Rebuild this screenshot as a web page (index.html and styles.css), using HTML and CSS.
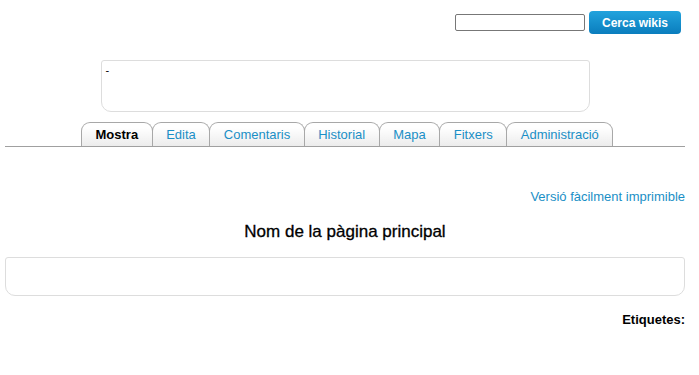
FILE: index.html
```html
<!DOCTYPE html>
<html lang="ca">
<head>
    <meta charset="UTF-8">
    <title>Wiki</title>
    <link rel="stylesheet" href="styles.css">
</head>
<body>
    <!-- Search bar -->
    <div class="search">
        <input type="text" class="search-input">
        <button class="search-button">Cerca wikis</button>
    </div>

    <!-- Page description -->
    <div class="description">-</div>

    <!-- Tabs -->
    <div class="tabs">
        <span class="tab active">Mostra</span>
        <span class="tab">Edita</span>
        <span class="tab">Comentaris</span>
        <span class="tab">Historial</span>
        <span class="tab">Mapa</span>
        <span class="tab">Fitxers</span>
        <span class="tab">Administració</span>
    </div>

    <!-- Page content -->
    <div class="print-link"><a href="#">Versió fàcilment imprimible</a></div>
    <h1 class="page-title">Nom de la pàgina principal</h1>
    <div class="content-box"></div>
    <div class="tags">Etiquetes:</div>
</body>
</html>
```

FILE: styles.css
```css
/* General page styling */
body {
    font-family: 'Liberation Sans', Arial, sans-serif;
    margin: 0;
    padding: 0 14px 0 5px;
    background: #fff;
    color: #000;
}

a {
    color: #1a8fc6;
    text-decoration: none;
}

/* Search bar */
.search {
    display: flex;
    justify-content: flex-end;
    align-items: center;
    gap: 4px;
    padding-top: 11px;
    height: 23px;
    padding-right: 4px;
}

.search-input {
    width: 126px;
    height: 13px;
    border: 1px solid #777;
    border-radius: 2px;
    padding: 1px;
    margin: 0;
}

.search-button {
    height: 23px;
    width: 92px;
    padding: 0;
    border: none;
    border-radius: 4px;
    background: linear-gradient(#22a3dd, #0a7dbd);
    color: #fff;
    font-family: 'Liberation Sans', Arial, sans-serif;
    font-weight: bold;
    font-size: 12px;
}

/* Description box */
.description {
    width: 479px;
    height: 44px;
    margin: 26px auto 0;
    padding: 3px 4px;
    border: 1px solid #ddd;
    border-radius: 3px 3px 10px 10px;
    font-size: 11px;
}

/* Tabs */
.tabs {
    display: flex;
    margin-top: 10px;
    padding-left: 76px;
    border-bottom: 1px solid #a0a0a0;
}

.tab {
    height: 23px;
    line-height: 24px;
    padding: 0 13.5px;
    margin-right: -1px;
    border: 1px solid #a8a8a8;
    border-bottom: none;
    border-radius: 9px 9px 0 0;
    background: linear-gradient(#fff 20%, #ececec);
    color: #1a8fc6;
    font-size: 13px;
}

.tab.active {
    color: #000;
    font-weight: bold;
}

/* Page content */
.print-link {
    text-align: right;
    font-size: 13px;
    margin-top: 42px;
}

.page-title {
    text-align: center;
    font-size: 17px;
    font-weight: normal;
    margin: 18px 0 0;
    -webkit-text-stroke: 0.3px #000;
}

.content-box {
    height: 37px;
    margin-top: 15px;
    border: 1px solid #ddd;
    border-radius: 3px 3px 10px 10px;
}

.tags {
    text-align: right;
    font-size: 13px;
    font-weight: bold;
    margin-top: 16px;
}
```
